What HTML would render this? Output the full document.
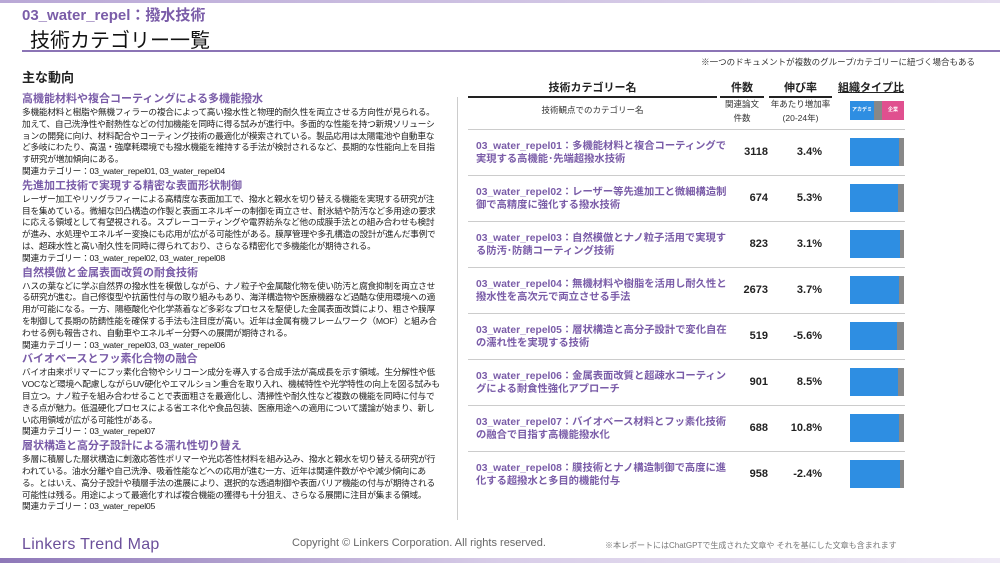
<!DOCTYPE html>
<html><head><meta charset="utf-8"><style>
*{margin:0;padding:0;box-sizing:border-box}
body{width:1000px;height:563px;background:#fff;position:relative;overflow:hidden;font-family:"Liberation Sans","Noto Sans CJK JP",sans-serif;color:#222}
.a{position:absolute}
.topbar{left:0;top:0;width:1000px;height:3px;background:linear-gradient(90deg,#b9a8d6,#e4dcef)}
.botbar{left:0;top:558px;width:1000px;height:5px;background:linear-gradient(90deg,#8e78b8,#d8cde8,#efeaf6)}
.h1{left:22px;top:4px;font-size:15px;font-weight:bold;color:#7a5ca8}
.h2{left:30px;top:24px;font-size:20px;color:#111}
.line{left:22px;top:50px;width:978px;height:2px;background:#8b74b5}
.note{right:25px;top:56px;font-size:8.5px;color:#333}
.left{left:22px;top:67px;width:420px}
.left h3{font-size:13px;font-weight:bold;margin-bottom:6px}
.left h4{font-size:11px;font-weight:bold;color:#7a5ca8;line-height:15px;margin-top:0}
.left p{font-size:8.7px;line-height:11.8px;color:#222;margin-bottom:1px;letter-spacing:-0.25px}
.vsep{left:457px;top:97px;width:1px;height:423px;background:#ccc}
.th{top:79px;font-size:11px;font-weight:bold;text-align:center;border-bottom:2px solid #222;padding-bottom:1px}
.sub{font-size:8.5px;text-align:center;line-height:14px;color:#333}
.row{left:468px;width:437px;height:46px;border-top:1.5px solid #ccc}
.row .n{position:absolute;left:8px;top:10px;width:252px;font-size:10.3px;font-weight:bold;color:#7a5ca8;line-height:13px}
.row .c{position:absolute;left:240px;width:60px;top:16px;text-align:right;font-size:11px;font-weight:bold}
.row .g{position:absolute;left:302px;width:52px;top:16px;text-align:right;font-size:11px;font-weight:bold}
.row .b{position:absolute;left:382px;top:8px;width:54px;height:28px;background:#2e8ee2;display:flex;justify-content:flex-end}
.row .b i{display:block;background:#888;height:100%}
</style></head><body>
<div class="a topbar"></div>
<div class="a h1">03_water_repel：撥水技術</div>
<div class="a h2">技術カテゴリー一覧</div>
<div class="a line"></div>
<div class="a note">※一つのドキュメントが複数のグループ/カテゴリーに紐づく場合もある</div>
<div class="a left">
<h3>主な動向</h3>
<h4>高機能材料や複合コーティングによる多機能撥水</h4>
<p>多機能材料と樹脂や無機フィラーの複合によって高い撥水性と物理的耐久性を両立させる方向性が見られる。加えて、自己洗浄性や耐熱性などの付加機能を同時に得る試みが進行中。多面的な性能を持つ新規ソリューションの開発に向け、材料配合やコーティング技術の最適化が模索されている。製品応用は太陽電池や自動車など多岐にわたり、高温・強摩耗環境でも撥水機能を維持する手法が検討されるなど、長期的な性能向上を目指す研究が増加傾向にある。<br>関連カテゴリー：03_water_repel01, 03_water_repel04</p>
<h4>先進加工技術で実現する精密な表面形状制御</h4>
<p>レーザー加工やリソグラフィーによる高精度な表面加工で、撥水と親水を切り替える機能を実現する研究が注目を集めている。微細な凹凸構造の作製と表面エネルギーの制御を両立させ、耐氷結や防汚など多用途の要求に応える領域として有望視される。スプレーコーティングや電界紡糸など他の成膜手法との組み合わせも検討が進み、水処理やエネルギー変換にも応用が広がる可能性がある。膜厚管理や多孔構造の設計が進んだ事例では、超疎水性と高い耐久性を同時に得られており、さらなる精密化で多機能化が期待される。<br>関連カテゴリー：03_water_repel02, 03_water_repel08</p>
<h4>自然模倣と金属表面改質の耐食技術</h4>
<p>ハスの葉などに学ぶ自然界の撥水性を模倣しながら、ナノ粒子や金属酸化物を使い防汚と腐食抑制を両立させる研究が進む。自己修復型や抗菌性付与の取り組みもあり、海洋構造物や医療機器など過酷な使用環境への適用が可能になる。一方、陽極酸化や化学蒸着など多彩なプロセスを駆使した金属表面改質により、粗さや膜厚を制御して長期の防錆性能を確保する手法も注目度が高い。近年は金属有機フレームワーク（MOF）と組み合わせる例も報告され、自動車やエネルギー分野への展開が期待される。<br>関連カテゴリー：03_water_repel03, 03_water_repel06</p>
<h4>バイオベースとフッ素化合物の融合</h4>
<p>バイオ由来ポリマーにフッ素化合物やシリコーン成分を導入する合成手法が高成長を示す領域。生分解性や低VOCなど環境へ配慮しながらUV硬化やエマルション重合を取り入れ、機械特性や光学特性の向上を図る試みも目立つ。ナノ粒子を組み合わせることで表面粗さを最適化し、清掃性や耐久性など複数の機能を同時に付与できる点が魅力。低温硬化プロセスによる省エネ化や食品包装、医療用途への適用について議論が始まり、新しい応用領域が広がる可能性がある。<br>関連カテゴリー：03_water_repel07</p>
<h4>層状構造と高分子設計による濡れ性切り替え</h4>
<p>多層に積層した層状構造に刺激応答性ポリマーや光応答性材料を組み込み、撥水と親水を切り替える研究が行われている。油水分離や自己洗浄、吸着性能などへの応用が進む一方、近年は関連件数がやや減少傾向にある。とはいえ、高分子設計や積層手法の進展により、選択的な透過制御や表面バリア機能の付与が期待される可能性は残る。用途によって最適化すれば複合機能の獲得も十分狙え、さらなる展開に注目が集まる領域。<br>関連カテゴリー：03_water_repel05</p>
</div>
<div class="a vsep"></div>
<div class="a th" style="left:468px;width:249px">技術カテゴリー名</div>
<div class="a th" style="left:720px;width:44px">件数</div>
<div class="a th" style="left:769px;width:63px">伸び率</div>
<div class="a th" style="left:836px;width:70px;border:none;text-decoration:underline">組織タイプ比</div>
<div class="a sub" style="left:468px;width:249px;top:103px">技術観点でのカテゴリー名</div>
<div class="a sub" style="left:720px;width:44px;top:97px">関連論文<br>件数</div>
<div class="a sub" style="left:769px;width:63px;top:97px">年あたり増加率<br>(20-24年)</div>
<div class="a" style="left:850px;top:101px;width:54px;height:19px;display:flex;font-size:5px;color:#fff;font-weight:bold;align-items:center"><span style="background:#2e8ee2;width:24px;height:100%;line-height:19px;text-align:center">アカデミア</span><span style="background:#888;width:8px;height:100%"></span><span style="background:#e0508f;flex:1;height:100%;line-height:19px;text-align:center">企業</span></div>
<div class="a row" style="top:129px"><div class="n">03_water_repel01：多機能材料と複合コーティングで実現する高機能･先端超撥水技術</div><div class="c">3118</div><div class="g">3.4%</div><div class="b"><i style="width:5px"></i></div></div>
<div class="a row" style="top:175px"><div class="n">03_water_repel02：レーザー等先進加工と微細構造制御で高精度に強化する撥水技術</div><div class="c">674</div><div class="g">5.3%</div><div class="b"><i style="width:6px"></i></div></div>
<div class="a row" style="top:221px"><div class="n">03_water_repel03：自然模倣とナノ粒子活用で実現する防汚･防錆コーティング技術</div><div class="c">823</div><div class="g">3.1%</div><div class="b"><i style="width:4px"></i></div></div>
<div class="a row" style="top:267px"><div class="n">03_water_repel04：無機材料や樹脂を活用し耐久性と撥水性を高次元で両立させる手法</div><div class="c">2673</div><div class="g">3.7%</div><div class="b"><i style="width:5px"></i></div></div>
<div class="a row" style="top:313px"><div class="n">03_water_repel05：層状構造と高分子設計で変化自在の濡れ性を実現する技術</div><div class="c">519</div><div class="g">-5.6%</div><div class="b"><i style="width:7px"></i></div></div>
<div class="a row" style="top:359px"><div class="n">03_water_repel06：金属表面改質と超疎水コーティングによる耐食性強化アプローチ</div><div class="c">901</div><div class="g">8.5%</div><div class="b"><i style="width:6px"></i></div></div>
<div class="a row" style="top:405px"><div class="n">03_water_repel07：バイオベース材料とフッ素化技術の融合で目指す高機能撥水化</div><div class="c">688</div><div class="g">10.8%</div><div class="b"><i style="width:5px"></i></div></div>
<div class="a row" style="top:451px"><div class="n">03_water_repel08：膜技術とナノ構造制御で高度に進化する超撥水と多目的機能付与</div><div class="c">958</div><div class="g">-2.4%</div><div class="b"><i style="width:4px"></i></div></div>
<div class="a" style="left:22px;top:536px;font-size:16px;color:#6b4f9a;letter-spacing:0.3px">Linkers Trend Map</div>
<div class="a" style="left:292px;top:537px;font-size:11px;color:#666">Copyright © Linkers Corporation. All rights reserved.</div>
<div class="a" style="left:605px;top:540px;font-size:8px;color:#777">※本レポートにはChatGPTで生成された文章や それを基にした文章も含まれます</div>
<div class="a botbar"></div>
</body></html>
